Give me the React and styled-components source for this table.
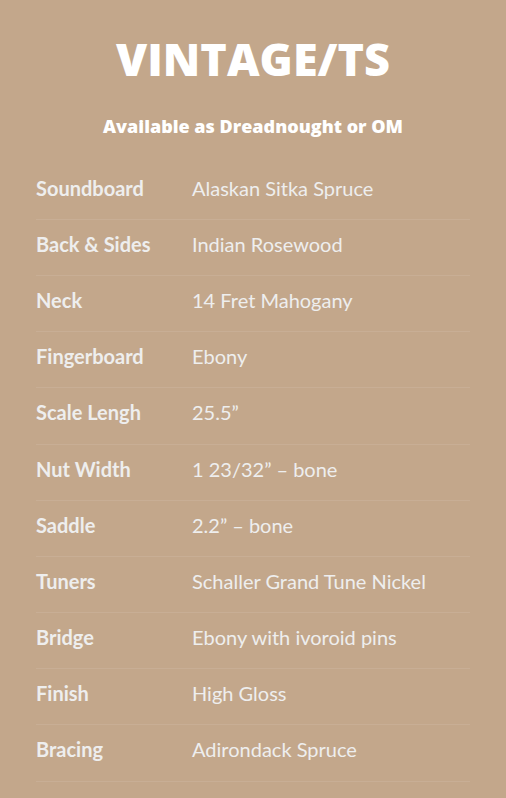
import React from 'react';
import styled, { createGlobalStyle } from 'styled-components';

const Global = createGlobalStyle`
  body {
    margin: 0;
    background: #c3a78b;
  }
`;

const Page = styled.div`
  padding: 30px 36px 20px;
  min-height: 798px;
  box-sizing: border-box;
  background: #c3a78b;
`;

const Title = styled.h1`
  margin: 0;
  text-align: center;
  font-family: 'Open Sans', sans-serif;
  font-weight: 800;
  font-size: 45px;
  line-height: 57.6px;
  color: #ffffff;
`;

const Subtitle = styled.h3`
  margin: 26px 0 25px;
  text-align: center;
  font-family: 'Open Sans', sans-serif;
  font-weight: 800;
  font-size: 18px;
  line-height: 25px;
  color: #ffffff;
`;

const Table = styled.div`
  display: flex;
  flex-direction: column;
`;

const Row = styled.div`
  display: grid;
  grid-template-columns: 156px 1fr;
  padding: 10px 0 16.2px;
  border-bottom: 1px solid rgba(255, 255, 255, 0.09);
  font-family: Lato, 'Open Sans', sans-serif;
  font-size: 20px;
  line-height: 29px;
  color: #eeeeee;
`;

const Label = styled.div`
  font-weight: 700;
`;

const Value = styled.div`
  font-weight: 400;
`;

const specs = [
  ['Soundboard', 'Alaskan Sitka Spruce'],
  ['Back & Sides', 'Indian Rosewood'],
  ['Neck', '14 Fret Mahogany'],
  ['Fingerboard', 'Ebony'],
  ['Scale Lengh', '25.5\u201D'],
  ['Nut Width', '1 23/32\u201D \u2013 bone'],
  ['Saddle', '2.2\u201D \u2013 bone'],
  ['Tuners', 'Schaller Grand Tune Nickel'],
  ['Bridge', 'Ebony with ivoroid pins'],
  ['Finish', 'High Gloss'],
  ['Bracing', 'Adirondack Spruce'],
];

export default function App() {
  return (
    <Page>
      <Global />
      <Title>VINTAGE/TS</Title>
      <Subtitle>Available as Dreadnought or OM</Subtitle>
      <Table>
        {specs.map(([k, v]) => (
          <Row key={k}>
            <Label>{k}</Label>
            <Value>{v}</Value>
          </Row>
        ))}
      </Table>
    </Page>
  );
}
